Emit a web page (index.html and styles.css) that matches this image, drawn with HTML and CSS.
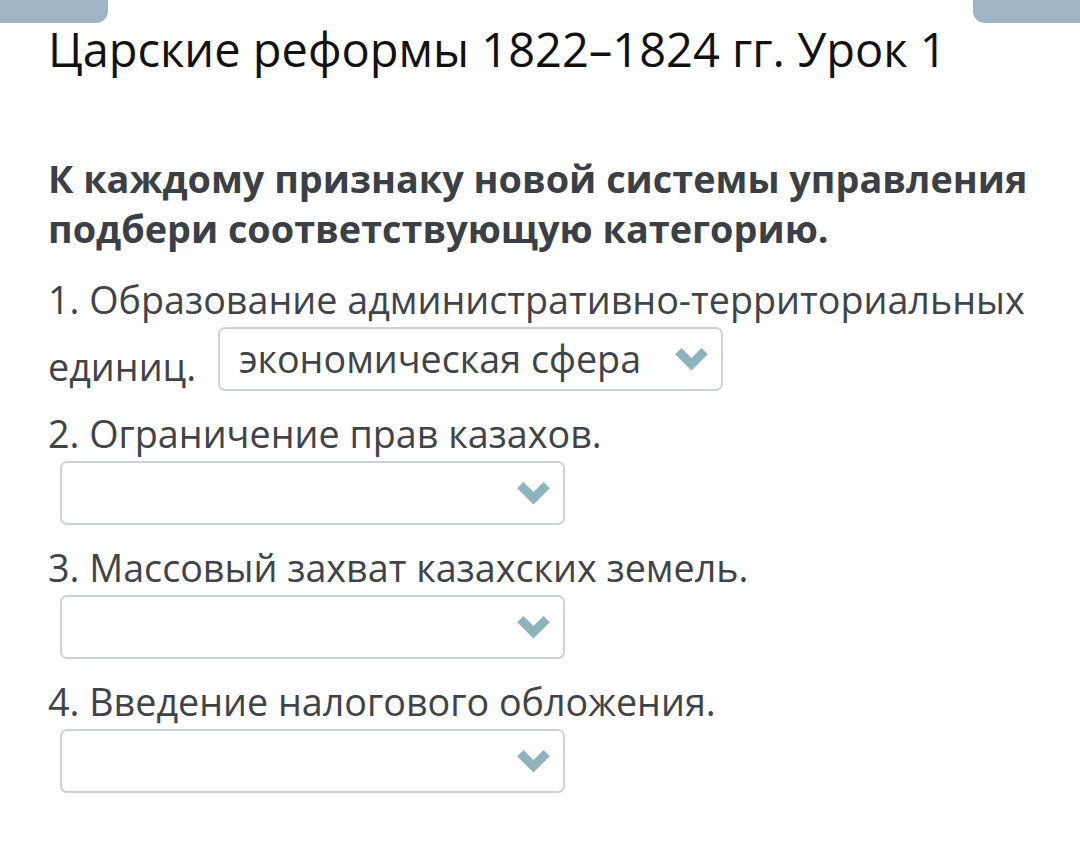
FILE: index.html
```html
<!DOCTYPE html>
<html lang="ru">

<head>
    <meta charset="UTF-8">
    <meta name="viewport" content="width=device-width, initial-scale=1.0">
    <title>Царские реформы 1822–1824 гг. Урок 1</title>
    <link rel="stylesheet" href="styles.css">
</head>

<body>
    <div class="top-bar">
        <div class="tab tab-left"></div>
        <div class="tab tab-right"></div>
    </div>

    <div class="container">
        <h1>Царские реформы 1822–1824 гг. Урок 1</h1>

        <p class="question">К каждому признаку новой системы управления подбери соответствующую категорию.</p>

        <p class="item">1. Образование административно-территориальных единиц.
            <span class="select"><span class="select-value">экономическая сфера</span><svg class="chevron" viewBox="0 0 34 24"><polygon points="0,6.5 6.5,0 17,10.5 27.5,0 34,6.5 17,23.5" /></svg></span>
        </p>
        <p class="item">2. Ограничение прав казахов.
            <span class="select"><span class="select-value">&nbsp;</span><svg class="chevron" viewBox="0 0 34 24"><polygon points="0,6.5 6.5,0 17,10.5 27.5,0 34,6.5 17,23.5" /></svg></span>
        </p>
        <p class="item">3. Массовый захват казахских земель.
            <span class="select"><span class="select-value">&nbsp;</span><svg class="chevron" viewBox="0 0 34 24"><polygon points="0,6.5 6.5,0 17,10.5 27.5,0 34,6.5 17,23.5" /></svg></span>
        </p>
        <p class="item">4. Введение налогового обложения.
            <span class="select"><span class="select-value">&nbsp;</span><svg class="chevron" viewBox="0 0 34 24"><polygon points="0,6.5 6.5,0 17,10.5 27.5,0 34,6.5 17,23.5" /></svg></span>
        </p>
    </div>
</body>

</html>
```

FILE: styles.css
```css
body {
    font-family: 'Open Sans', 'Noto Sans', sans-serif;
    margin: 0;
    padding: 0;
    background-color: #fff;
    color: #404349;
}

.top-bar {
    display: flex;
    justify-content: space-between;
    height: 23px;
}

.tab {
    width: 108px;
    height: 23px;
    background-color: #9fb5c3;
}

.tab-left {
    border-bottom-right-radius: 12px;
}

.tab-right {
    width: 107px;
    border-bottom-left-radius: 12px;
}

.container {
    padding: 0 44px 0 48px;
}

h1 {
    margin: 2px 0 0;
    font-size: 47px;
    font-weight: 400;
    line-height: 48px;
    color: #111;
}

.question {
    margin: 81px 0 0;
    font-size: 37.8px;
    font-weight: 700;
    line-height: 50px;
    color: #3b3f46;
}

.item {
    margin: 19px 0 0;
    font-size: 37.7px;
    line-height: 54px;
}

.item + .item {
    margin-top: 13px;
}

.select {
    display: inline-flex;
    align-items: center;
    justify-content: space-between;
    box-sizing: border-box;
    width: 505px;
    height: 64px;
    margin: 0 12px;
    padding: 0 13px 0 19px;
    border: 2px solid #cbd3d3;
    border-radius: 7px;
    vertical-align: 8px;
    line-height: 40px;
}

.select-value {
    white-space: nowrap;
}

.chevron {
    width: 33px;
    height: 23px;
    fill: #8db3bd;
}
```
